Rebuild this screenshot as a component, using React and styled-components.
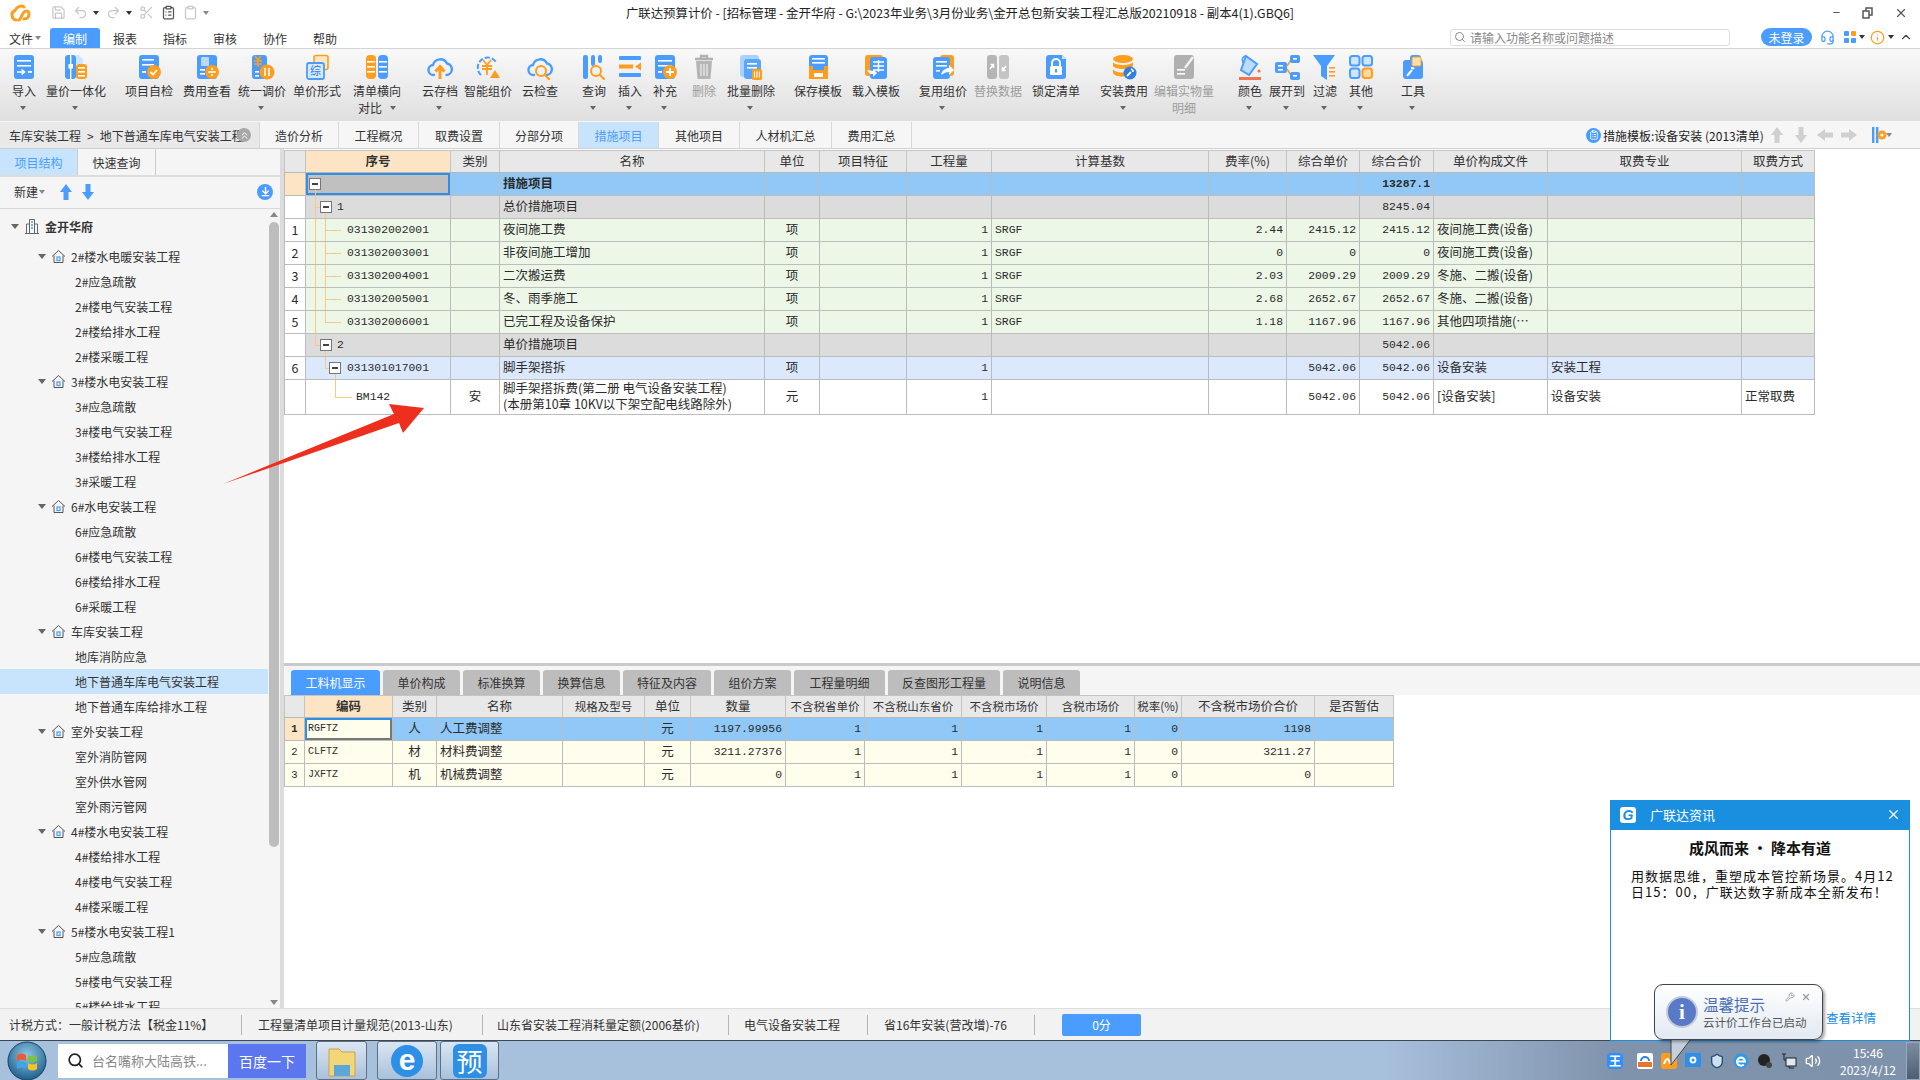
import React from "react";
import styled, { createGlobalStyle } from "styled-components";
import {
  Save, Undo2, Redo2, Scissors, ClipboardList, Clipboard, Search, Headset, Info,
  ChevronUp, ChevronsUp, X, Minus, Volume2, Wrench, Shield, ArrowDownToLine,
} from "lucide-react";

const BLUE = "#4a9cff";
const ORANGE = "#ff9d1e";
const UI_FONT = `"Noto Sans CJK SC", "Noto Sans", sans-serif`;
const GRID_FONT = `"Liberation Mono", "Noto Sans CJK SC", monospace`;

const GlobalStyle = createGlobalStyle`
  html, body { margin: 0; padding: 0; background: #fff; }
  body { font-family: ${UI_FONT}; font-size: 12px; color: #333; }
`;

const Shell = styled.div`
  position: relative;
  width: 1920px;
  height: 1080px;
  overflow: hidden;
  display: flex;
  flex-direction: column;
  background: #fff;
`;

/* title bar */
const TitleBar = styled.div`
  height: 28px;
  flex: none;
  box-sizing: border-box;
  padding-bottom: 3px;
  display: flex;
  align-items: center;
  background: #fff;
`;
const QuickAccess = styled.div`
  width: 300px;
  display: flex;
  align-items: center;
  padding-left: 9px;
  gap: 7px;
  box-sizing: border-box;
`;
const QuickLogo = styled.svg`
  width: 24px;
  height: 18px;
  margin-right: 11px;
`;
const Title = styled.div`
  flex: 1;
  text-align: center;
  font-size: 12.4px;
  color: #222;
  white-space: nowrap;
`;
const WindowButtons = styled.div`
  width: 300px;
  display: flex;
  justify-content: flex-end;
  align-items: center;
  gap: 21px;
  padding-right: 12px;
  box-sizing: border-box;
  color: #555;
`;
const TinyCaret = styled.span`
  width: 0;
  height: 0;
  margin-left: -2px;
  border: 3px solid transparent;
  border-top: 4px solid ${(p) => p.$color || "#888"};
  border-bottom: 0;
`;

/* menu row */
const MenuBar = styled.div`
  height: 20px;
  flex: none;
  display: flex;
  align-items: stretch;
  background: #fff;
`;
const MenuItem = styled.div`
  width: 50px;
  display: flex;
  align-items: center;
  justify-content: center;
  gap: 4px;
  font-size: 12px;
  border-radius: 3px 3px 0 0;
  color: ${(p) => (p.$active ? "#fff" : "#333")};
  background: ${(p) => (p.$active ? BLUE : "transparent")};
`;
const MenuRight = styled.div`
  margin-left: auto;
  padding-bottom: 2px;
  display: flex;
  align-items: center;
`;
const SearchBox = styled.div`
  width: 280px;
  height: 17px;
  display: flex;
  align-items: center;
  gap: 4px;
  padding-left: 3px;
  box-sizing: border-box;
  border: 1px solid #ddd;
  border-radius: 3px;
  color: #888;
  font-size: 12px;
`;
const LoginPill = styled.div`
  width: 51px;
  height: 18px;
  margin-left: 31px;
  border-radius: 9px;
  background: ${BLUE};
  color: #fff;
  font-size: 12px;
  display: flex;
  align-items: center;
  justify-content: center;
`;
const MenuIcons = styled.div`
  width: 108px;
  display: flex;
  align-items: center;
  gap: 5px;
  padding-left: 8px;
  box-sizing: border-box;
`;
const TileGrid = styled.div`
  display: grid;
  grid-template-columns: 5px 5px;
  gap: 2px;
  margin-left: 4px;
`;
const Tile = styled.span`
  height: 5px;
  border-radius: 1px;
  background: ${(p) => p.$color};
`;

/* ribbon */
const Ribbon = styled.div`
  height: 72px;
  flex: none;
  display: flex;
  align-items: flex-start;
  border-top: 1px solid #d4d4d4;
  background: linear-gradient(#f9f9f9, #dfdfdf);
`;
const RibbonItem = styled.div`
  flex: none;
  width: ${(p) => p.$w}px;
  margin-left: ${(p) => p.$ml}px;
  padding-top: 5px;
  display: flex;
  flex-direction: column;
  align-items: center;
  color: ${(p) => (p.$off ? "#9c9c9c" : "#333")};
`;
const RibbonLabel = styled.div`
  margin-top: 2px;
  font-size: 12px;
  line-height: 17px;
  white-space: nowrap;
  text-align: center;
`;
const RibbonTail = styled.div`
  height: 17px;
  display: flex;
  align-items: center;
  gap: 10px;
  font-size: 12px;
  white-space: nowrap;
`;

/* tabs under ribbon */
const TabStrip = styled.div`
  height: 28px;
  flex: none;
  display: flex;
  box-sizing: border-box;
  padding-top: 1px;
  border-bottom: 1px solid #cfcfcf;
  background: #f6f6f6;
`;
const Crumb = styled.div`
  width: 260px;
  position: relative;
  display: flex;
  align-items: center;
  gap: 6px;
  padding-left: 9px;
  box-sizing: border-box;
  overflow: hidden;
  white-space: nowrap;
  background: #e9e9e9;
  border-right: 1px solid #d8d8d8;
`;
const CrumbClose = styled.span`
  position: absolute;
  right: 8px;
  top: 6px;
  width: 14px;
  height: 14px;
  border-radius: 50%;
  background: #a8a8a8;
  color: #fff;
  display: flex;
  align-items: center;
  justify-content: center;
`;
const SheetTab = styled.div`
  width: ${(p) => p.$w}px;
  flex: none;
  box-sizing: border-box;
  display: flex;
  align-items: center;
  justify-content: center;
  border-right: 1px solid #d8d8d8;
  color: ${(p) => (p.$active ? BLUE : "#333")};
  background: ${(p) => (p.$active ? "#c8e4fd" : "transparent")};
`;
const TemplateBar = styled.div`
  margin-left: auto;
  display: flex;
  align-items: center;
  padding-right: 28px;
`;
const TemplateDot = styled.span`
  width: 15px;
  height: 15px;
  margin-right: 2px;
  border-radius: 50%;
  background: ${BLUE};
  display: flex;
  align-items: center;
  justify-content: center;
`;
const TemplateText = styled.span`
  width: 160px;
  font-size: 12px;
  white-space: nowrap;
  color: #222;
`;
const GhostArrows = styled.div`
  display: flex;
  align-items: center;
  gap: 6px;
  margin: 0 14px 0 5px;
`;

/* body */
const Main = styled.div`
  flex: 1;
  min-height: 0;
  display: flex;
  background: #fff;
`;
const Side = styled.aside`
  width: 280px;
  flex: none;
  display: flex;
  flex-direction: column;
  background: #f5f5f5;
  border-right: 4px solid #dcdcdc;
`;
const SideTabs = styled.div`
  height: 26px;
  flex: none;
  display: flex;
  border-bottom: 2px solid #dcdcdc;
`;
const SideTab = styled.div`
  width: 78px;
  box-sizing: border-box;
  border-right: 1px solid #ccc;
  display: flex;
  align-items: center;
  justify-content: center;
  color: ${(p) => (p.$active ? BLUE : "#333")};
  background: ${(p) => (p.$active ? "#c8e4fd" : "#f5f5f5")};
`;
const SideTools = styled.div`
  height: 32px;
  flex: none;
  box-sizing: border-box;
  padding: 0 7px 2px 14px;
  display: flex;
  align-items: center;
  gap: 3px;
  border-bottom: 1px solid #d8d8d8;
`;
const MoveArrow = styled.svg`
  width: 14px;
  height: 16px;
  margin-left: ${(p) => p.$ml}px;
`;
const RoundDown = styled.span`
  width: 16px;
  height: 16px;
  margin-left: auto;
  border-radius: 50%;
  background: ${BLUE};
  display: flex;
  align-items: center;
  justify-content: center;
`;
const TreeArea = styled.div`
  flex: 1;
  min-height: 0;
  display: flex;
`;
const TreeList = styled.div`
  flex: 1;
  min-width: 0;
  overflow: hidden;
  padding-top: 4.5px;
`;
const TreeRow = styled.div`
  height: 25px;
  display: flex;
  align-items: center;
  gap: 5px;
  box-sizing: border-box;
  white-space: nowrap;
  padding-left: ${(p) => (p.$level === 0 ? 11 : p.$level === 1 ? 38 : 75)}px;
  margin-bottom: ${(p) => (p.$level === 0 ? 5 : 0)}px;
  font-weight: ${(p) => (p.$level === 0 ? 700 : 400)};
  background: ${(p) => (p.$selected ? "#c8e4fd" : "transparent")};
`;
const TreeCaret = styled.span`
  width: 0;
  height: 0;
  border: 4px solid transparent;
  border-top: 5px solid #666;
  border-bottom: 0;
`;
const TreeBar = styled.div`
  width: 12px;
  flex: none;
  display: flex;
  flex-direction: column;
  align-items: center;
  padding-top: 3px;
`;
const ScrollUp = styled.span`
  width: 0;
  height: 0;
  border: 4px solid transparent;
  border-bottom: 5px solid #888;
  border-top: 0;
`;
const ScrollThumb = styled.div`
  width: 10px;
  height: 625px;
  margin-top: 5px;
  border-radius: 5px;
  background: #bdbdbd;
`;
const ScrollDown = styled.span`
  width: 0;
  height: 0;
  margin-top: auto;
  margin-bottom: 3px;
  border: 4px solid transparent;
  border-top: 5px solid #888;
  border-bottom: 0;
`;

const Content = styled.div`
  flex: 1;
  min-width: 0;
  display: flex;
  flex-direction: column;
`;
const UpperPane = styled.div`
  height: 517px;
  flex: none;
  box-sizing: border-box;
  padding-top: 1px;
  border-bottom: 3px solid #c9c9c9;
`;
const LowerTabs = styled.div`
  height: 29px;
  box-sizing: border-box;
  padding: 4px 0 0 7px;
  display: flex;
  gap: 3px;
  background: #f5f5f5;
`;
const LowerTab = styled.div`
  width: ${(p) => p.$w}px;
  box-sizing: border-box;
  display: flex;
  align-items: center;
  justify-content: center;
  border-radius: 3px 3px 0 0;
  color: ${(p) => (p.$active ? "#fff" : "#333")};
  background: ${(p) => (p.$active ? BLUE : "#bdbdbd")};
`;

/* grids */
const Grid = styled.table`
  table-layout: fixed;
  border-collapse: collapse;
  width: ${(p) => p.$width}px;
  border-left: 1px solid #bfbfbf;
`;
const Th = styled.th`
  width: ${(p) => p.$w}px;
  height: 22px;
  padding: 0 0 2px;
  box-sizing: border-box;
  border: 1px solid #c4c4c4;
  border-bottom-color: #b8b8b8;
  font-size: ${(p) => (p.$small ? 11.5 : 12.5)}px;
  font-weight: ${(p) => (p.$strong ? 700 : 400)};
  white-space: nowrap;
  overflow: hidden;
  color: #333;
  background: ${(p) => (p.$strong ? "#fde4c4" : "#e8e8e8")};
`;
const rowColors = {
  root: "#90c8f8",
  group: "#dcdcdc",
  leaf: "#edf7e8",
  item: "#dce9fd",
  plain: "#fff",
  cream: "#fffdeb",
};
const Tr = styled.tr`
  height: ${(p) => p.$h || 23}px;
  background: ${(p) => rowColors[p.$kind]};
`;
const Td = styled.td`
  position: relative;
  padding-top: 0;
  padding-right: ${(p) => (p.$align === "right" ? 3 : 0)}px;
  padding-bottom: ${(p) => (p.$mono ? 0 : 2)}px;
  padding-left: ${(p) => (p.$align ? 0 : 3)}px;
  box-sizing: border-box;
  border: 1px solid #bcbcbc;
  overflow: hidden;
  white-space: nowrap;
  font-family: ${(p) => (p.$mono ? GRID_FONT : UI_FONT)};
  font-size: ${(p) => (p.$mono ? 11.4 : 12.5)}px;
  font-weight: ${(p) => (p.$bold ? 700 : 400)};
  line-height: 16px;
  text-align: ${(p) => p.$align || "left"};
  color: #2b2b2b;
`;
const IndexTd = styled(Td)`
  text-align: center;
  padding: 0;
  background: ${(p) => (p.$marked ? "#fde4c4" : "#fff")};
`;
const LowerIndexTd = styled(IndexTd)`
  font-size: 10.5px;
  font-weight: ${(p) => (p.$marked ? 700 : 400)};
  background: ${(p) => (p.$marked ? "#fde4c4" : "#fffdeb")};
`;
const SeqTd = styled(Td)`
  padding: 0 0 0 ${(p) => p.$pad}px;
  background: ${(p) => (p.$current ? "#c0c0c0" : "transparent")};
  box-shadow: ${(p) => (p.$current ? "inset 0 0 0 2px #2f8fe8" : "none")};
`;
const Guide = styled.span`
  position: absolute;
  left: ${(p) => p.$x}px;
  top: ${(p) => (p.$part === "bottom" ? "50%" : "0")};
  bottom: ${(p) => (p.$part === "top" ? "50%" : "0")};
  width: 1px;
  background: #ffc880;
`;
const Stem = styled.span`
  position: absolute;
  left: ${(p) => p.$x}px;
  top: 50%;
  width: ${(p) => p.$w}px;
  height: 1px;
  background: #ffc880;
`;
const ExpandBox = styled.span`
  position: absolute;
  left: ${(p) => p.$x}px;
  top: 5px;
  width: 12px;
  height: 12px;
  box-sizing: border-box;
  border: 1px solid #777;
  background: #fff;
  &::after {
    content: "";
    position: absolute;
    left: 2px;
    right: 2px;
    top: 4px;
    height: 2px;
    background: #444;
  }
`;
const CodeTd = styled(Td)`
  font-size: 10px;
  background: ${(p) => (p.$current ? "#fffdeb" : "transparent")};
  box-shadow: ${(p) => (p.$current ? "inset 2px 2px 0 #2f8fe8, inset -2px -2px 0 #777" : "none")};
`;

/* status + taskbar */
const StatusBar = styled.div`
  height: 32px;
  flex: none;
  display: flex;
  align-items: center;
  border-top: 1px solid #ddd;
  box-sizing: border-box;
  background: #f2f2f2;
`;
const StatusItem = styled.div`
  width: ${(p) => p.$w}px;
  height: 20px;
  flex: none;
  box-sizing: border-box;
  padding-left: ${(p) => p.$pad}px;
  display: flex;
  align-items: center;
  white-space: nowrap;
  border-right: 1px solid #b5b5b5;
`;
const ScoreButton = styled.div`
  width: 79px;
  height: 22px;
  margin-left: 27px;
  border-radius: 2px;
  background: ${BLUE};
  color: #fff;
  display: flex;
  align-items: center;
  justify-content: center;
`;
const Taskbar = styled.div`
  height: 40px;
  flex: none;
  display: flex;
  align-items: center;
  box-sizing: border-box;
  border-top: 1px solid #3c4855;
  background: linear-gradient(90deg, #a7c0dc 0, #a7c0dc 72%, #8093ad 84%, #7f92ab 100%);
`;
const StartOrb = styled.svg`
  width: 40px;
  height: 40px;
  margin-left: 7px;
  flex: none;
`;
const SearchField = styled.div`
  width: 170px;
  height: 34px;
  margin-left: 11px;
  flex: none;
  box-sizing: border-box;
  padding-left: 9px;
  display: flex;
  align-items: center;
  gap: 8px;
  background: #fff;
  color: #888;
  font-size: 13px;
  white-space: nowrap;
  overflow: hidden;
`;
const SearchButton = styled.div`
  width: 78px;
  height: 34px;
  flex: none;
  background: #5b76ef;
  color: #fff;
  font-size: 14px;
  display: flex;
  align-items: center;
  justify-content: center;
`;
const TaskButton = styled.div`
  width: ${(p) => p.$w}px;
  height: 39px;
  margin-left: ${(p) => p.$ml}px;
  flex: none;
  box-sizing: border-box;
  border: 1px solid #5d6f84;
  border-radius: 3px;
  background: linear-gradient(#dbe6f2, #a9c1dc);
  display: flex;
  align-items: center;
  justify-content: center;
`;
const EBadge = styled.span`
  width: 32px;
  height: 32px;
  border-radius: 50%;
  background: #2d8fe6;
  color: #fff;
  font: 700 30px/30px "Liberation Sans", sans-serif;
  text-align: center;
`;
const PreBadge = styled.span`
  width: 34px;
  height: 34px;
  border-radius: 6px;
  background: #2d8fe6;
  color: #fff;
  font-size: 26px;
  line-height: 34px;
  text-align: center;
`;
const Tray = styled.div`
  margin-left: auto;
  height: 100%;
  display: flex;
  align-items: center;
`;
const TrayIcons = styled.div`
  display: flex;
  align-items: center;
  gap: 8px;
`;
const TrayKing = styled.span`
  width: 16px;
  height: 16px;
  margin-right: 6px;
  border-radius: 4px;
  background: #2f8fff;
  color: #fff;
  font-size: 12px;
  line-height: 16px;
  text-align: center;
  font-weight: 700;
`;
const Clock = styled.div`
  width: 70px;
  margin-left: 12px;
  color: #fff;
  font-size: 12px;
  line-height: 17px;
  text-align: center;
`;
const ShowDesktop = styled.div`
  width: 14px;
  height: 38px;
  margin-left: 3px;
  border: 1px solid #9aa7b8;
  box-sizing: border-box;
  background: linear-gradient(#7b8ca1, #4f5f73);
`;

/* things floating over the page */
const RedArrow = styled.svg`
  position: absolute;
  left: 0;
  top: 0;
  width: 1920px;
  height: 1080px;
  pointer-events: none;
`;
const NewsPopup = styled.div`
  position: absolute;
  left: 1610px;
  top: 800px;
  width: 300px;
  height: 241px;
  box-sizing: border-box;
  border: 1px solid #1a8fe0;
  background: #fff;
  display: flex;
  flex-direction: column;
`;
const NewsHead = styled.div`
  height: 29px;
  flex: none;
  box-sizing: border-box;
  padding: 0 8px 2px 9px;
  display: flex;
  align-items: center;
  background: #1a8fe0;
  color: #fff;
  font-size: 13px;
`;
const NewsLogo = styled.span`
  width: 16px;
  height: 16px;
  margin-right: 14px;
  border-radius: 3px;
  background: #fff;
  color: #1a8fe0;
  font: italic 700 14px/16px "Liberation Sans", sans-serif;
  text-align: center;
`;
const NewsClose = styled.span`
  margin-left: auto;
  display: flex;
`;
const NewsTitle = styled.div`
  margin-top: 8px;
  text-align: center;
  font-size: 15px;
  line-height: 20px;
  font-weight: 700;
  color: #111;
`;
const NewsBody = styled.div`
  margin-top: 10px;
  padding: 0 8px 0 20px;
  font-size: 13px;
  line-height: 16px;
  letter-spacing: 1px;
  white-space: nowrap;
  color: #111;
`;
const NewsLink = styled.div`
  margin-top: auto;
  margin-bottom: 13px;
  padding-right: 33px;
  text-align: right;
  font-size: 12.5px;
  color: #1a8fe0;
`;
const Balloon = styled.div`
  position: absolute;
  left: 1654px;
  top: 984px;
  width: 169px;
  height: 56px;
  box-sizing: border-box;
  padding-left: 11px;
  display: flex;
  align-items: center;
  gap: 5px;
  border: 1px solid #3d4650;
  border-radius: 9px;
  background: linear-gradient(#ffffff, #e2e9f2);
  box-shadow: 2px 2px 3px rgba(0, 0, 0, 0.35);
`;
const BalloonInfo = styled.span`
  width: 32px;
  height: 32px;
  flex: none;
  box-sizing: border-box;
  border: 2px solid #c5cbd6;
  border-radius: 50%;
  background: #5b79c9;
  color: #fff;
  font: 700 21px/28px "Liberation Serif", serif;
  text-align: center;
`;
const BalloonHead = styled.div`
  font-size: 15.5px;
  line-height: 20px;
  color: #4a6fb5;
`;
const BalloonText = styled.div`
  font-size: 11.5px;
  line-height: 16px;
  color: #555;
  white-space: nowrap;
`;
const BalloonTools = styled.span`
  position: absolute;
  right: 11px;
  top: 7px;
  display: flex;
  gap: 6px;
  color: #9a9a9a;
`;
const BalloonTail = styled.svg`
  position: absolute;
  left: 1670px;
  top: 1039px;
  width: 22px;
  height: 27px;
`;

const Card = ({ x = 3, y = 1, w = 20, h = 24, c = BLUE }) => <rect x={x} y={y} width={w} height={h} rx="3" fill={c} />;
const Lines = ({ x = 6, w = 14, ys = [6, 11], c = "#fff" }) =>
  ys.map((y) => <rect key={y} x={x} y={y} width={w} height="1.6" fill={c} />);
const Cloud = () => (
  <path d="M7 21a5 5 0 0 1-1-10A7.5 7.5 0 0 1 20 9.5 5.8 5.8 0 0 1 19.5 21" fill="none" stroke={BLUE} strokeWidth="2.4" strokeLinecap="round" />
);
const Lens = ({ cx, cy, r = 5 }) => (
  <>
    <circle cx={cx} cy={cy} r={r} fill="none" stroke={ORANGE} strokeWidth="2" />
    <path d={`M${cx + r - 1} ${cy + r - 1}l4 4`} stroke={ORANGE} strokeWidth="2.2" strokeLinecap="round" />
  </>
);
const Stack = ({ x, c }) => (
  <>
    <rect x={x} y="1" width="10" height="24" rx="4" fill={c} />
    {[7, 12, 17].map((y) => <rect key={y} x={x + 1} y={y} width="8" height="1.6" fill="#fff" />)}
  </>
);

const ribbonIcons = {
  import: <><Card /><Lines ys={[6, 11]} /><path d="M6 18h7M10.5 15.5l3 2.5-3 2.5" stroke="#fff" strokeWidth="1.6" fill="none" /><rect x="17" y="17" width="4" height="1.8" fill="#fff" /></>,
  unify: <><Card x={2} w={11} /><rect x="7" y="1" width="1.4" height="24" fill="#fff" /><rect x="5.5" y="10" width="4.5" height="4.5" fill="#fff" /><path d="M13 1h3l4 5v4h-7z" fill="#cfe4ff" /><Card x={13} y={10} w={11} h={15} c={ORANGE} /><Lines x={15} w={7} ys={[13, 17, 21]} /></>,
  check: <><Card /><Lines ys={[5, 10]} w={12} /><rect x="6" y="17" width="4" height="1.8" fill="#fff" /><circle cx="18" cy="18" r="7" fill={ORANGE} /><path d="M14.5 18l2.5 2.5 4-4.5" stroke="#fff" strokeWidth="1.8" fill="none" /></>,
  fee: <><Card /><rect x="7" y="3" width="8" height="9" rx="1" fill="#b9d9ff" /><Lines ys={[15, 19]} w={5} /><circle cx="18" cy="18" r="7" fill={ORANGE} /><path d="M14 18h8" stroke="#fff" strokeWidth="1.6" /><circle cx="18" cy="15" r="1" fill="#fff" /><circle cx="18" cy="21" r="1" fill="#fff" /></>,
  adjust: <><Card w={15} /><path d="M6 2l3 4 3-4M5 7h8M5 10h8M9 6v7" stroke={ORANGE} strokeWidth="1.6" fill="none" /><Lines ys={[17, 21]} w={4} /><circle cx="18" cy="18" r="7.5" fill={ORANGE} /><path d="M16 14v8M20 14v8" stroke="#fff" strokeWidth="1.6" /></>,
  form: <><rect x="10" y="1.5" width="14" height="14" rx="2" fill="#ffe6c4" stroke={ORANGE} strokeWidth="1.6" /><rect x="3" y="9" width="17" height="16" rx="2" fill="#d7e9ff" stroke={BLUE} strokeWidth="1.8" /><text x="11.5" y="21" fontSize="11" textAnchor="middle" fill="#2f7fe0">综</text></>,
  list: <><Stack x={2} c={ORANGE} /><Stack x={14} c={BLUE} /></>,
  store: <><Cloud /><path d="M13 25V14M8.5 17.5L13 12.5l4.5 5" stroke={ORANGE} strokeWidth="3" fill="none" /></>,
  smart: <><path d="M6 21A10 10 0 1 1 21 8" fill="none" stroke={BLUE} strokeWidth="2" strokeDasharray="5 2" /><path d="M8 6l4 5 4-5M7 12h10M7 15h10M12 11v10" stroke={ORANGE} strokeWidth="1.8" fill="none" /><path d="M15 24l5-8 5 8z" fill={ORANGE} /></>,
  inspect: <><Cloud /><Lens cx={14} cy={17} /></>,
  query: <><rect x="2" y="1" width="5" height="24" rx="2" fill={BLUE} /><rect x="10" y="1" width="4" height="11" rx="2" fill={BLUE} /><rect x="17" y="1" width="4" height="8" rx="2" fill={BLUE} /><Lens cx={15} cy={17} r={5} /></>,
  insert: <><rect x="2" y="2" width="22" height="4" rx="1" fill={BLUE} /><rect x="2" y="10.5" width="14" height="4" fill={ORANGE} /><path d="M24 8.5v8l-6-4z" fill={ORANGE} /><rect x="2" y="19" width="22" height="4" rx="1" fill={BLUE} /></>,
  add: <><Card /><Lines ys={[6, 11]} w={14} /><rect x="6" y="17" width="4" height="1.8" fill="#fff" /><circle cx="18" cy="18" r="7" fill={ORANGE} /><path d="M14 18h8M18 14v8" stroke="#fff" strokeWidth="2" /></>,
  trash: <><path d="M4 5h18M10 5V2h6v3" stroke="#b0b0b0" strokeWidth="2.4" fill="none" /><path d="M5 7h16l-1.5 18h-13z" fill="#b5b5b5" /><path d="M10 10v12M13 10v12M16 10v12" stroke="#eee" strokeWidth="1.2" /></>,
  batch: <><Card x={2} w={19} h={22} c="#a9d2ff" /><Card x={6} y={5} w={17} h={20} c="#5aa5ff" /><Lines x={9} w={10} ys={[9, 13]} /><rect x="14" y="15" width="10" height="11" rx="1.5" fill={ORANGE} /><path d="M16.5 17.5v6M19 17.5v6M21.5 17.5v6" stroke="#fff" strokeWidth="1.1" /></>,
  save: <><Card x={4} w={19} h={15} /><Lines x={7} w={13} ys={[4, 8]} /><path d="M4 12h4v4h11v-4h4v13H4z" fill={ORANGE} /><rect x="9" y="19" width="9" height="4" fill="#fff" /></>,
  load: <><Card x={2} w={18} h={21} c={ORANGE} /><Card x={7} y={3} w={17} h={22} /><path d="M10 8h11M10 12h11M10 16h11M15.5 6v12" stroke="#fff" strokeWidth="1.4" /><path d="M4 16l6 1v-2l4 4-4 4v-3l-3 0z" fill="#fff" /></>,
  reuse: <><Card x={10} w={14} h={21} c={ORANGE} /><Card y={3} w={17} h={22} /><Lines ys={[7, 11]} w={11} /><rect x="6" y="16" width="4" height="1.6" fill="#fff" /><path d="M11 21c1-5 5-7 8-7v-3l5 5-5 5v-3c-3 0-5 1-8 3z" fill="#fff" /></>,
  swap: <><Card x={2} w={10} c="#b5b5b5" /><Card x={14} w={10} c="#c4c4c4" /><path d="M5 15l3-4M5.5 10.5H8.5V14" stroke="#fff" strokeWidth="1.5" fill="none" /><path d="M21 12l-3 4M17.5 13v3.5H21" stroke="#fff" strokeWidth="1.5" fill="none" /></>,
  lock: <><path d="M3 4a3 3 0 0 1 3-3h13l4 4v17a3 3 0 0 1-3 3H6a3 3 0 0 1-3-3z" fill={BLUE} /><path d="M19 1l4 4h-4z" fill="#cfe4ff" /><path d="M9 12V9a4 4 0 0 1 8 0v3" stroke="#fff" strokeWidth="2" fill="none" /><rect x="7" y="12" width="12" height="9" rx="1.5" fill="#fff" /><rect x="12" y="15" width="2" height="3.5" fill={BLUE} /></>,
  install: <><ellipse cx="12" cy="5" rx="10" ry="4" fill={ORANGE} /><path d="M2 8c2 4 18 4 20 0v4c-2 4-18 4-20 0zM2 15c2 4 12 4 13 3l1 4c-4 1-12 1-14-3z" fill={ORANGE} /><circle cx="19" cy="19" r="6.5" fill="#2f7fe0" /><path d="M16 22l4-4M20 15a3 3 0 0 1 2 3" stroke="#fff" strokeWidth="1.8" fill="none" /></>,
  edit: <><Card w={20} c="#b0b0b0" /><path d="M14 14L22 3" stroke="#f2f2f2" strokeWidth="2.4" /><Lines ys={[15, 19]} w={8} /></>,
  color: <><path d="M9 2l11 8-8 11-8-5z" fill="#bcdcff" stroke={BLUE} strokeWidth="2" /><path d="M9 2c-3 0-5 3-3 7" stroke={BLUE} strokeWidth="1.6" fill="none" /><circle cx="22" cy="17" r="1.6" fill="#ee7752" /><rect x="2" y="23" width="22" height="3" fill="#ee7752" /></>,
  expand: <><rect x="1" y="8" width="12" height="11" rx="2" fill={BLUE} /><rect x="4" y="11" width="5" height="1.6" fill="#fff" /><rect x="4" y="15" width="5" height="1.6" fill="#fff" /><path d="M13 12l4-6M13 15l4 6" stroke={ORANGE} strokeWidth="1.6" /><rect x="16" y="1" width="10" height="8" rx="2" fill={BLUE} /><rect x="16" y="18" width="10" height="8" rx="2" fill={BLUE} /><rect x="19" y="4" width="4" height="1.6" fill="#fff" /><rect x="19" y="21" width="4" height="1.6" fill="#fff" /></>,
  filter: <><path d="M1 1h22l-8 11v14l-6-4V12z" fill={BLUE} /><Lines x={17} w={6} ys={[13, 17, 21]} c={ORANGE} /></>,
  other: <><rect x="2" y="2" width="9.5" height="9.5" rx="2.5" fill="#cfe4ff" stroke={BLUE} strokeWidth="2" /><rect x="14.5" y="2" width="9.5" height="9.5" rx="2.5" fill="#cfe4ff" stroke={BLUE} strokeWidth="2" /><rect x="2" y="14.5" width="9.5" height="9.5" rx="2.5" fill="#cfe4ff" stroke={BLUE} strokeWidth="2" /><rect x="14.5" y="14.5" width="9.5" height="9.5" rx="2.5" fill="#ffd9a0" stroke={ORANGE} strokeWidth="2" /></>,
  tools: <><path d="M3 9a3 3 0 0 1 3-3h4V4a3 3 0 0 1 3-3h5a3 3 0 0 1 3 3v2a3 3 0 0 1 2 3v13a3 3 0 0 1-3 3H6a3 3 0 0 1-3-3z" fill={BLUE} /><rect x="12" y="3" width="9" height="9" rx="1.5" fill="#ffdfb0" stroke={ORANGE} /><path d="M7 22l5-6M11 14a3 3 0 0 1 3 1" stroke="#fff" strokeWidth="2" fill="none" /></>,
};

const ribbon = [
  { id: "import", label: "导入", w: 30, ml: 9, caret: true },
  { id: "unify", label: "量价一体化", w: 62, ml: 6, caret: true },
  { id: "check", label: "项目自检", w: 50, ml: 17 },
  { id: "fee", label: "费用查看", w: 50, ml: 8 },
  { id: "adjust", label: "统一调价", w: 50, ml: 5, caret: true },
  { id: "form", label: "单价形式", w: 50, ml: 5 },
  { id: "list", label: "清单横向", more: "对比", w: 50, ml: 10, caret: true },
  { id: "store", label: "云存档", w: 40, ml: 18, caret: true },
  { id: "smart", label: "智能组价", w: 50, ml: 3 },
  { id: "inspect", label: "云检查", w: 40, ml: 7 },
  { id: "query", label: "查询", w: 28, ml: 20, caret: true },
  { id: "insert", label: "插入", w: 28, ml: 8, caret: true },
  { id: "add", label: "补充", w: 28, ml: 7, caret: true },
  { id: "trash", label: "删除", w: 28, ml: 11, off: true },
  { id: "batch", label: "批量删除", w: 50, ml: 8, caret: true },
  { id: "save", label: "保存模板", w: 50, ml: 17 },
  { id: "load", label: "载入模板", w: 50, ml: 8 },
  { id: "reuse", label: "复用组价", w: 50, ml: 17, caret: true },
  { id: "swap", label: "替换数据", w: 50, ml: 5, off: true },
  { id: "lock", label: "锁定清单", w: 50, ml: 8 },
  { id: "install", label: "安装费用", w: 50, ml: 18, caret: true },
  { id: "edit", label: "编辑实物量", more: "明细", w: 62, ml: 4, off: true },
  { id: "color", label: "颜色", w: 28, ml: 21, caret: true },
  { id: "expand", label: "展开到", w: 40, ml: 3, caret: true },
  { id: "filter", label: "过滤", w: 28, ml: 4, caret: true },
  { id: "other", label: "其他", w: 28, ml: 8, caret: true },
  { id: "tools", label: "工具", w: 28, ml: 24, caret: true },
];

const sheets = [
  ["造价分析", 79], ["工程概况", 80], ["取费设置", 81], ["分部分项", 79],
  ["措施项目", 80], ["其他项目", 81], ["人材机汇总", 92], ["费用汇总", 80],
];

const tree = [
  ["金开华府", 0],
  ["2#楼水电暖安装工程", 1], ["2#应急疏散", 2], ["2#楼电气安装工程", 2], ["2#楼给排水工程", 2], ["2#楼采暖工程", 2],
  ["3#楼水电安装工程", 1], ["3#应急疏散", 2], ["3#楼电气安装工程", 2], ["3#楼给排水工程", 2], ["3#采暖工程", 2],
  ["6#水电安装工程", 1], ["6#应急疏散", 2], ["6#楼电气安装工程", 2], ["6#楼给排水工程", 2], ["6#采暖工程", 2],
  ["车库安装工程", 1], ["地库消防应急", 2], ["地下普通车库电气安装工程", 2, true], ["地下普通车库给排水工程", 2],
  ["室外安装工程", 1], ["室外消防管网", 2], ["室外供水管网", 2], ["室外雨污管网", 2],
  ["4#楼水电安装工程", 1], ["4#楼给排水工程", 2], ["4#楼电气安装工程", 2], ["4#楼采暖工程", 2],
  ["5#楼水电安装工程1", 1], ["5#应急疏散", 2], ["5#楼电气安装工程", 2], ["5#楼给排水工程", 2],
];

const measureHead = [
  ["", 21], ["序号", 145, true], ["类别", 49], ["名称", 265], ["单位", 55], ["项目特征", 87], ["工程量", 85],
  ["计算基数", 217], ["费率(%)", 78], ["综合单价", 73], ["综合合价", 74], ["单价构成文件", 114], ["取费专业", 194], ["取费方式", 73],
];

const leafGuides = [[9, "full"], [19, "full"]];
const leaf = (no, code, name, rate, price, file, last) => ({
  kind: "leaf", no, code, name, unit: "项", qty: "1", base: "SRGF", rate, price, total: price, file,
  pad: 41, guides: last ? [[9, "full"], [19, "top"]] : leafGuides, stem: [19, 16],
});
const measures = [
  { kind: "root", marked: true, current: true, name: "措施项目", total: "13287.1", pad: 0, box: 3, guides: [[9, "bottom"]] },
  { kind: "group", code: "1", name: "总价措施项目", total: "8245.04", pad: 31, box: 14, guides: [[9, "full"], [19, "bottom"]], stem: [9, 5] },
  leaf("1", "031302002001", "夜间施工费", "2.44", "2415.12", "夜间施工费(设备)"),
  leaf("2", "031302003001", "非夜间施工增加", "0", "0", "夜间施工费(设备)"),
  leaf("3", "031302004001", "二次搬运费", "2.03", "2009.29", "冬施、二搬(设备)"),
  leaf("4", "031302005001", "冬、雨季施工", "2.68", "2652.67", "冬施、二搬(设备)"),
  leaf("5", "031302006001", "已完工程及设备保护", "1.18", "1167.96", "其他四项措施(…", true),
  { kind: "group", code: "2", name: "单价措施项目", total: "5042.06", pad: 31, box: 14, guides: [[9, "top"], [19, "bottom"]], stem: [9, 5] },
  { kind: "item", no: "6", code: "031301017001", name: "脚手架搭拆", unit: "项", qty: "1", price: "5042.06", total: "5042.06", file: "设备安装", major: "安装工程", pad: 41, box: 23, guides: [[19, "top"], [29, "bottom"]], stem: [19, 4] },
  { kind: "plain", h: 35, code: "BM142", type: "安", name: ["脚手架搭拆费(第二册 电气设备安装工程)", "(本册第10章 10KV以下架空配电线路除外)"], unit: "元", qty: "1", price: "5042.06", total: "5042.06", file: "[设备安装]", major: "设备安装", mode: "正常取费", pad: 50, guides: [[29, "top"]], stem: [29, 17] },
];

const lowerTabs = [
  ["工料机显示", 89], ["单价构成", 77], ["标准换算", 77], ["换算信息", 77], ["特征及内容", 88],
  ["组价方案", 77], ["工程量明细", 91], ["反查图形工程量", 112], ["说明信息", 77],
];
const costHead = [
  ["", 20], ["编码", 88, true], ["类别", 44], ["名称", 126], ["规格及型号", 82], ["单位", 46], ["数量", 95],
  ["不含税省单价", 79], ["不含税山东省价", 97], ["不含税市场价", 85], ["含税市场价", 88], ["税率(%)", 47], ["不含税市场价合价", 133], ["是否暂估", 79],
];
const costs = [
  { kind: "root", code: "RGFTZ", type: "人", name: "人工费调整", qty: "1197.99956", tax: "1198", current: true },
  { kind: "cream", code: "CLFTZ", type: "材", name: "材料费调整", qty: "3211.27376", tax: "3211.27" },
  { kind: "cream", code: "JXFTZ", type: "机", name: "机械费调整", qty: "0", tax: "0" },
];

const status = [
  ["计税方式：一般计税方法【税金11%】", 242, 9],
  ["工程量清单项目计量规范(2013-山东)", 241, 16],
  ["山东省安装工程消耗量定额(2006基价)", 246, 14],
  ["电气设备安装工程", 139, 15],
  ["省16年安装(营改增)-76", 167, 16],
];

function MeasureRow({ row, index }) {
  return (
    <Tr $kind={row.kind} $h={row.h}>
      <IndexTd $marked={row.marked}>{row.no}</IndexTd>
      <SeqTd $mono $pad={row.pad} $current={row.current}>
        {row.guides.map(([x, part]) => <Guide key={x} $x={x} $part={part} />)}
        {row.stem && <Stem $x={row.stem[0]} $w={row.stem[1]} />}
        {row.box !== undefined && <ExpandBox $x={row.box} />}
        {row.code}
      </SeqTd>
      <Td $align="center">{row.type}</Td>
      <Td $bold={index === 0}>
        {Array.isArray(row.name) ? row.name.map((line) => <div key={line}>{line}</div>) : row.name}
      </Td>
      <Td $align="center">{row.unit}</Td>
      <Td />
      <Td $mono $align="right">{row.qty}</Td>
      <Td $mono>{row.base}</Td>
      <Td $mono $align="right">{row.rate}</Td>
      <Td $mono $align="right">{row.price}</Td>
      <Td $mono $align="right" $bold={index === 0}>{row.total}</Td>
      <Td>{row.file}</Td>
      <Td>{row.major}</Td>
      <Td>{row.mode}</Td>
    </Tr>
  );
}

function CostRow({ row, index }) {
  return (
    <Tr $kind={row.kind}>
      <LowerIndexTd $mono $marked={row.current}>{index + 1}</LowerIndexTd>
      <CodeTd $mono $current={row.current}>{row.code}</CodeTd>
      <Td $align="center">{row.type}</Td>
      <Td>{row.name}</Td>
      <Td />
      <Td $align="center">元</Td>
      <Td $mono $align="right">{row.qty}</Td>
      <Td $mono $align="right">1</Td>
      <Td $mono $align="right">1</Td>
      <Td $mono $align="right">1</Td>
      <Td $mono $align="right">1</Td>
      <Td $mono $align="right">0</Td>
      <Td $mono $align="right">{row.tax}</Td>
      <Td />
    </Tr>
  );
}

function GhostArrow({ turn }) {
  return (
    <svg width="18" height="18" viewBox="0 0 18 18" transform={`rotate(${turn})`}>
      <path d="M9 1l6 8h-3.5v8h-5V9H3z" fill="#d0d0d0" />
    </svg>
  );
}

function HouseIcon() {
  return (
    <svg width="15" height="15" viewBox="0 0 15 15" fill="none" stroke="#555" strokeWidth="1">
      <path d="M1 7.5L7.5 1.5 14 7.5M3 6.5v7h9v-7" />
      <rect x="6" y="8" width="3" height="3.5" stroke={BLUE} strokeWidth="1.2" />
    </svg>
  );
}

function TowerIcon() {
  return (
    <svg width="16" height="16" viewBox="0 0 16 16" fill="none" stroke="#666" strokeWidth="1">
      <path d="M1 15.5h14M2.5 15.5V6h3M5.5 15.5V1.5h5v14M10.5 6h3v9.5" />
      <path d="M7 4h2M7 7h2M7 10h2" stroke={BLUE} strokeWidth="1.4" />
    </svg>
  );
}

export default function App() {
  return (
    <Shell>
      <GlobalStyle />
      <TitleBar>
        <QuickAccess>
          <QuickLogo viewBox="0 0 24 18">
            <path d="M7 16a5 5 0 0 1-1-9.5C8 2 13 1 15 3M10 16c2-1 3-6 5-8s5-1 5 2-2 5-5 5" fill="none" stroke={ORANGE} strokeWidth="3" strokeLinecap="round" />
          </QuickLogo>
          <Save size={15} color="#c8c8c8" />
          <Undo2 size={15} color="#c8c8c8" />
          <TinyCaret $color="#333" />
          <Redo2 size={15} color="#c8c8c8" />
          <TinyCaret $color="#333" />
          <Scissors size={15} color="#c8c8c8" />
          <ClipboardList size={15} color="#555" />
          <Clipboard size={15} color="#c8c8c8" />
          <TinyCaret />
        </QuickAccess>
        <Title>广联达预算计价 - [招标管理 - 金开华府 - G:\2023年业务\3月份业务\金开总包新安装工程汇总版20210918 - 副本4(1).GBQ6]</Title>
        <WindowButtons>
          <Minus size={9} strokeWidth={3} />
          <svg width="11" height="12" viewBox="0 0 11 12" fill="none" stroke="#555" strokeWidth="1.5">
            <rect x="1" y="4" width="6" height="7" />
            <path d="M4 4V1h6v7H7" />
          </svg>
          <X size={14} />
        </WindowButtons>
      </TitleBar>

      <MenuBar>
        <MenuItem>文件<TinyCaret /></MenuItem>
        <MenuItem $active>编制</MenuItem>
        {["报表", "指标", "审核", "协作", "帮助"].map((m) => <MenuItem key={m}>{m}</MenuItem>)}
        <MenuRight>
          <SearchBox><Search size={12} />请输入功能名称或问题描述</SearchBox>
          <LoginPill>未登录</LoginPill>
          <MenuIcons>
            <Headset size={15} color={BLUE} />
            <TileGrid>
              <Tile $color={BLUE} /><Tile $color={ORANGE} />
              <Tile $color={BLUE} /><Tile $color={BLUE} />
            </TileGrid>
            <TinyCaret $color="#333" />
            <Info size={15} color={ORANGE} />
            <TinyCaret $color="#333" />
            <ChevronUp size={14} color="#444" />
          </MenuIcons>
        </MenuRight>
      </MenuBar>

      <Ribbon>
        {ribbon.map((item) => (
          <RibbonItem key={item.id} $w={item.w} $ml={item.ml} $off={item.off}>
            <svg width="26" height="26" viewBox="0 0 26 26">{ribbonIcons[item.id]}</svg>
            <RibbonLabel>{item.label}</RibbonLabel>
            <RibbonTail>
              {item.more}
              {item.caret && <TinyCaret $color="#666" />}
            </RibbonTail>
          </RibbonItem>
        ))}
      </Ribbon>

      <TabStrip>
        <Crumb>
          车库安装工程 <span>&gt;</span> 地下普通车库电气安装工程
          <CrumbClose><ChevronsUp size={11} /></CrumbClose>
        </Crumb>
        {sheets.map(([label, w]) => <SheetTab key={label} $w={w} $active={label === "措施项目"}>{label}</SheetTab>)}
        <TemplateBar>
          <TemplateDot><ClipboardList size={10} color="#fff" /></TemplateDot>
          <TemplateText>措施模板:设备安装 (2013清单)</TemplateText>
          <GhostArrows>
            <GhostArrow turn={0} /><GhostArrow turn={180} /><GhostArrow turn={-90} /><GhostArrow turn={90} />
          </GhostArrows>
          <svg width="16" height="18" viewBox="0 0 16 18">
            <rect x="0" y="1" width="2.4" height="16" fill={BLUE} />
            <rect x="4" y="1" width="2.4" height="16" fill={BLUE} />
            <circle cx="10" cy="9" r="4.5" fill={ORANGE} />
            <circle cx="10" cy="9" r="1.6" fill="#fff" />
          </svg>
          <TinyCaret />
        </TemplateBar>
      </TabStrip>

      <Main>
        <Side>
          <SideTabs>
            <SideTab $active>项目结构</SideTab>
            <SideTab>快速查询</SideTab>
          </SideTabs>
          <SideTools>
            新建<TinyCaret />
            <MoveArrow $ml={11} viewBox="0 0 14 16"><path d="M7 0l6 8H9.5v8h-5V8H1z" fill={BLUE} /></MoveArrow>
            <MoveArrow $ml={5} viewBox="0 0 14 16"><path d="M7 16l6-8H9.5V0h-5v8H1z" fill={BLUE} /></MoveArrow>
            <RoundDown><ArrowDownToLine size={11} color="#fff" strokeWidth={3} /></RoundDown>
          </SideTools>
          <TreeArea>
            <TreeList>
              {tree.map(([label, level, selected]) => (
                <TreeRow key={label} $level={level} $selected={selected}>
                  {level < 2 && <TreeCaret />}
                  {level === 0 && <TowerIcon />}
                  {level === 1 && <HouseIcon />}
                  {label}
                </TreeRow>
              ))}
            </TreeList>
            <TreeBar>
              <ScrollUp />
              <ScrollThumb />
              <ScrollDown />
            </TreeBar>
          </TreeArea>
        </Side>

        <Content>
          <UpperPane>
            <Grid $width={1530}>
              <thead>
                <tr>{measureHead.map(([label, w, strong], i) => <Th key={i} $w={w} $strong={strong}>{label}</Th>)}</tr>
              </thead>
              <tbody>
                {measures.map((row, i) => <MeasureRow key={i} row={row} index={i} />)}
              </tbody>
            </Grid>
          </UpperPane>
          <LowerTabs>
            {lowerTabs.map(([label, w], i) => <LowerTab key={label} $w={w} $active={i === 0}>{label}</LowerTab>)}
          </LowerTabs>
          <Grid $width={1109}>
            <thead>
              <tr>{costHead.map(([label, w, strong], i) => <Th key={i} $w={w} $strong={strong} $small={w < 100 && label.length > 4}>{label}</Th>)}</tr>
            </thead>
            <tbody>
              {costs.map((row, i) => <CostRow key={row.code} row={row} index={i} />)}
            </tbody>
          </Grid>
        </Content>
      </Main>

      <StatusBar>
        {status.map(([text, w, pad]) => <StatusItem key={text} $w={w} $pad={pad}>{text}</StatusItem>)}
        <ScoreButton>0分</ScoreButton>
      </StatusBar>

      <Taskbar>
        <StartOrb viewBox="0 0 40 40">
          <defs>
            <radialGradient id="orb" cx="50%" cy="35%" r="65%">
              <stop offset="0" stopColor="#8fc7e8" />
              <stop offset="1" stopColor="#1f5f8c" />
            </radialGradient>
          </defs>
          <circle cx="20" cy="20" r="19" fill="url(#orb)" stroke="#16405f" />
          <path d="M10 14c3-2 6-2 9 0v6c-3-2-6-2-9 0z" fill="#ee5b32" />
          <path d="M21 14c3 2 6 2 9 0v6c-3 2-6 2-9 0z" fill="#7cc242" />
          <path d="M10 22c3-2 6-2 9 0v6c-3-2-6-2-9 0z" fill="#3ea6e6" />
          <path d="M21 22c3 2 6 2 9 0v6c-3 2-6 2-9 0z" fill="#f7c325" />
        </StartOrb>
        <SearchField><Search size={17} color="#222" strokeWidth={2.4} />台名嘴称大陆高铁...</SearchField>
        <SearchButton>百度一下</SearchButton>
        <TaskButton $w={51} $ml={10}>
          <svg width="30" height="32" viewBox="0 0 30 32">
            <path d="M2 4h10l3 3h13v24H2z" fill="#f3d67a" stroke="#c9a545" />
            <rect x="7" y="20" width="16" height="11" fill="#5aa7d8" />
          </svg>
        </TaskButton>
        <TaskButton $w={60} $ml={10}><EBadge>e</EBadge></TaskButton>
        <TaskButton $w={59} $ml={3}><PreBadge>预</PreBadge></TaskButton>
        <Tray>
          <TrayIcons>
            <TrayKing>王</TrayKing>
            <svg width="16" height="16" viewBox="0 0 16 16"><rect width="16" height="16" rx="2" fill="#fff" /><path d="M1 14V9h14v5z" fill="#e8752b" /><path d="M4 8a4 4 0 0 1 8 0" fill="none" stroke="#2f7fe0" strokeWidth="2" /></svg>
            <svg width="16" height="16" viewBox="0 0 16 16"><rect width="16" height="16" rx="3" fill={ORANGE} /><path d="M3 11c2-6 4-6 5-3s3 3 5-3" stroke="#fff" strokeWidth="2" fill="none" /></svg>
            <svg width="16" height="16" viewBox="0 0 16 16"><rect width="16" height="14" rx="1" fill="#2f8fe8" /><circle cx="8" cy="7" r="3.4" fill="#fff" /><circle cx="8" cy="7" r="1.5" fill="#2f8fe8" /></svg>
            <Shield size={16} color="#1f4f7a" fill="#cfe0ee" />
            <svg width="16" height="16" viewBox="0 0 16 16"><circle cx="8" cy="8" r="7.5" fill="#2f9be8" /><path d="M4 8.5h8a4 4 0 1 0-1.2 3" fill="none" stroke="#fff" strokeWidth="2" /></svg>
            <svg width="16" height="16" viewBox="0 0 16 16"><circle cx="7" cy="7" r="6" fill="#222" /><circle cx="12" cy="12" r="3" fill="#444" /></svg>
            <svg width="16" height="16" viewBox="0 0 16 16" fill="none" stroke="#222"><rect x="5" y="5" width="10" height="8" fill="#dfe8f2" /><path d="M3 1v6h2M1 1h4M8 13v2h5" /></svg>
            <Volume2 size={16} color="#fff" />
          </TrayIcons>
          <Clock>15:46<br />2023/4/12</Clock>
          <ShowDesktop />
        </Tray>
      </Taskbar>

      <RedArrow viewBox="0 0 1920 1080">
        <polygon points="223,484 394,414 389,404 424,408 403,433 399,423" fill="#ef2f1d" />
      </RedArrow>

      <NewsPopup>
        <NewsHead>
          <NewsLogo>G</NewsLogo>
          广联达资讯
          <NewsClose><X size={15} color="#fff" /></NewsClose>
        </NewsHead>
        <NewsTitle>成风而来 · 降本有道</NewsTitle>
        <NewsBody>用数据思维，重塑成本管控新场景。4月12<br />日15：00，广联达数字新成本全新发布！</NewsBody>
        <NewsLink>查看详情</NewsLink>
      </NewsPopup>

      <BalloonTail viewBox="0 0 22 27">
        <path d="M1 0h20L1 26z" fill="#c6d0dd" stroke="#3d4650" />
      </BalloonTail>
      <Balloon>
        <BalloonInfo>i</BalloonInfo>
        <div>
          <BalloonHead>温馨提示</BalloonHead>
          <BalloonText>云计价工作台已启动</BalloonText>
        </div>
        <BalloonTools><Wrench size={10} /><X size={10} strokeWidth={3} /></BalloonTools>
      </Balloon>
    </Shell>
  );
}
